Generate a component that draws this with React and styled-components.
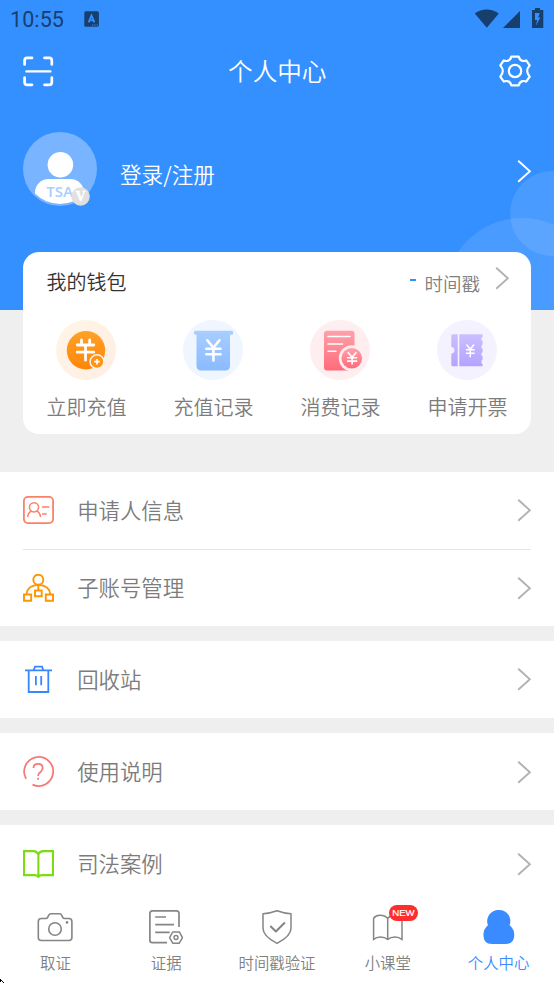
import React from "react";
import styled, { createGlobalStyle } from "styled-components";

const GlobalStyle = createGlobalStyle`
  * {
    box-sizing: border-box;
  }
  body {
    margin: 0;
    background: #efefef;
    font-family: "Noto Sans CJK SC", "Noto Sans", sans-serif;
    font-weight: 350;
    overflow: hidden;
  }
  svg {
    display: block;
    flex: none;
  }
`;

const Screen = styled.div`
  position: relative;
  display: flex;
  flex-direction: column;
  width: 554px;
  height: 984px;
  overflow: hidden;
  background: #efefef;
`;

const Hero = styled.header`
  position: relative;
  flex: none;
  height: 310px;
  overflow: hidden;
  background: #3590ff;
  color: #fff;
`;

const Bubble = styled.span`
  position: absolute;
  left: ${(props) => props.$x}px;
  top: ${(props) => props.$y}px;
  width: ${(props) => props.$size}px;
  height: ${(props) => props.$size}px;
  border-radius: 50%;
  background: rgba(255, 255, 255, 0.1);
`;

const StatusBar = styled.div`
  display: flex;
  align-items: center;
  height: 38px;
  padding: 0 10px;
  color: #173f6e;
`;

const Clock = styled.span`
  width: 74px;
  padding-top: 2px;
  font: 400 21.5px/24px Roboto, sans-serif;
  letter-spacing: 0.1px;
`;

const StatusIcons = styled.div`
  margin-left: auto;
`;

const TitleBar = styled.div`
  display: flex;
  align-items: center;
  justify-content: space-between;
  height: 66px;
  padding: 0 22.5px 0 23px;
`;

const Title = styled.h1`
  margin: 0;
  padding: 0 0 2px 1px;
  font-size: 24.6px;
  font-weight: 350;
  line-height: 36px;
`;

const Profile = styled.div`
  display: flex;
  align-items: center;
  height: 74px;
  margin-top: 28px;
  padding: 0 23px;
`;

const LoginText = styled.span`
  flex: 1;
  padding: 9px 0 0 23px;
  font-size: 21.6px;
  line-height: 32px;
`;

const ProfileArrow = styled.span`
  padding-top: 4px;
`;

const Wallet = styled.section`
  position: relative;
  flex: none;
  height: 181.5px;
  margin: -58px 23px 38px;
  border-radius: 16px;
  background: #fff;
`;

const WalletHead = styled.div`
  display: flex;
  align-items: center;
  height: 57px;
  padding: 0 22px 0 23.5px;
`;

const WalletTitle = styled.h2`
  flex: 1;
  margin: 0;
  padding-top: 2px;
  color: #333;
  font-size: 20px;
  font-weight: 350;
`;

const Balance = styled.span`
  width: 6.5px;
  height: 2px;
  margin: 0 8px 1px 0;
  background: #3590ff;
`;

const Unit = styled.span`
  padding: 4px 15px 0 0;
  color: #808080;
  font-size: 18.5px;
`;

const WalletArrow = styled.span`
  padding-bottom: 5px;
`;

const Actions = styled.div`
  display: grid;
  grid-template-columns: repeat(4, 1fr);
  padding-top: 11px;
`;

const Action = styled.div`
  display: flex;
  flex-direction: column;
  align-items: center;
  color: #7c7c7c;
  font-size: 20px;
  line-height: 30px;
  gap: 12px;

  & > svg {
    margin-right: 1.6px;
  }
`;

const Group = styled.section`
  flex: none;
  margin-bottom: ${(props) => (props.$last ? 0 : "15.3px")};
  padding: 0 23px;
  background: #fff;
`;

const Row = styled.div`
  display: flex;
  align-items: center;
  height: 77px;
  color: #7c7c7c;
  font-size: 21.4px;

  & + & {
    border-top: 1.5px solid #e4e4e4;
  }
`;

const RowLabel = styled.span`
  flex: 1;
  padding: 0 0 2px 23.2px;
`;

const TabBar = styled.nav`
  display: grid;
  grid-template-columns: repeat(5, 1fr);
  flex: none;
  height: 82px;
  margin-top: auto;
  background: #fff;
`;

const Tab = styled.div`
  position: relative;
  display: flex;
  flex-direction: column;
  align-items: center;
  padding-top: 8px;
  gap: 6px;
  color: ${(props) => (props.$active ? "#3a8bff" : "#7f7f7f")};
  font-size: 15.4px;
  line-height: 24px;
  white-space: nowrap;
`;

const NewBadge = styled.span`
  position: absolute;
  top: 3px;
  left: 56.3px;
  width: 29.5px;
  height: 16px;
  border-radius: 8px;
  background: #ff2d2d;
  color: #fff;
  font: 400 9.6px/16px "Liberation Sans", sans-serif;
  -webkit-text-stroke: 0.2px #fff;
  text-align: center;
`;

const Pointer = styled.svg`
  position: absolute;
  left: 0;
  bottom: 0;
`;

const Chevron = ({ color = "#b2b2b2" }) => (
  <svg width="14" height="24" viewBox="0 0 14 24" fill="none" stroke={color} strokeWidth="1.9">
    <path d="M1.2 1.7 12.9 12.2 1.2 22.7" />
  </svg>
);

const LangIcon = () => (
  <svg width="16" height="17" viewBox="0 0 16 17">
    <rect x="0.3" y="0.3" width="14.6" height="15.5" rx="1.5" fill="#173f6e" />
    <path d="M4.6 11.3 7.5 4.5l2.9 6.8M5.4 9.4h4.2" fill="none" stroke="#3590ff" strokeWidth="1.8" />
    <path d="M8 14.1h6" stroke="#3590ff" strokeWidth="1" strokeDasharray="1.3 1" />
  </svg>
);

const SignalIcons = () => (
  <svg width="70" height="24" viewBox="0 0 70 24" fill="#173f6e">
    <path d="M.8 6.5C7.7 1.2 17.5 1.2 24.8 6.5L12.8 20.7Z" />
    <path d="M46 4v17H29Z" />
    <path d="M61 1h5v2h3.3v18H58V3h3Z" />
    <path d="M65 6h-4v7h2.2l-1.5 6 4.7-8.5h-2.2L65.8 6Z" fill="#3590ff" />
  </svg>
);

const ScanIcon = () => (
  <svg width="31" height="31" viewBox="0 0 31 31" fill="none" stroke="#fff" strokeWidth="2.7" strokeLinecap="round">
    <path d="M1.6 8.5V4.5q0-2.6 2.6-2.6H9M21.5 1.9h4.7q2.6 0 2.6 2.6v4M1.6 21.5v4.7q0 2.6 2.6 2.6H9M21.5 28.8h4.7q2.6 0 2.6-2.6v-4.7" />
    <path d="M3.5 15.4h23.8" strokeWidth="2.4" />
  </svg>
);

const GearIcon = () => (
  <svg width="32" height="32" viewBox="0 0 32 32" fill="none" stroke="#fff" strokeWidth="2.2">
    <path d="M12.3 1.6h7.4q1 3.8 4 4.3 1.7.3 3.5-.5l3.5 5q-2.5 2.9-2.5 5.6t2.5 5.6l-3.5 5q-1.8-.8-3.5-.5-3 .5-4 4.3h-7.4q-1-3.8-4-4.3-1.7-.3-3.5.5l-3.5-5q2.5-2.9 2.5-5.6t-2.5-5.6l3.5-5q1.8.8 3.5.5 3-.5 4-4.3Z" strokeLinejoin="round" />
    <circle cx="16" cy="16" r="6.2" />
  </svg>
);

const Avatar = () => (
  <svg width="74" height="76" viewBox="0 0 74 76">
    <defs>
      <clipPath id="avatarClip">
        <circle cx="37" cy="37.5" r="35.5" />
      </clipPath>
    </defs>
    <circle cx="37" cy="38" r="37" fill="#78b4ff" />
    <circle cx="37.4" cy="33.8" r="12.8" fill="#fff" />
    <rect x="12" y="48" width="49" height="33" rx="13.5" fill="#fff" clipPath="url(#avatarClip)" />
    <text x="23.3" y="66" fill="#abd0ff" fontFamily="Noto Sans" fontWeight="600" fontSize="15" letterSpacing="0">TSA</text>
    <circle cx="57.6" cy="65.5" r="9.2" fill="#e0e0e0" />
    <text x="57.6" y="70.3" textAnchor="middle" fill="#fff" stroke="#fff" strokeWidth="0.5" fontFamily="Liberation Serif" fontWeight="700" fontSize="14">V</text>
  </svg>
);

const RechargeIcon = () => (
  <svg width="60" height="60" viewBox="0 0 60 60">
    <defs>
      <linearGradient id="rechargeBg" x2="1" y2="1">
        <stop stopColor="#fff5e6" />
        <stop offset="1" stopColor="#ffeee4" />
      </linearGradient>
      <linearGradient id="rechargeCoin" x2="0" y2="1">
        <stop stopColor="#ffa128" />
        <stop offset="1" stopColor="#ff8508" />
      </linearGradient>
    </defs>
    <circle cx="30" cy="30" r="30" fill="url(#rechargeBg)" />
    <circle cx="30" cy="30.3" r="19.2" fill="url(#rechargeCoin)" />
    <path d="M25.5 20v4.5M33.7 20v4.5M21.3 25h16.5M21.3 32.2h16.5M29.5 26v14.2" fill="none" stroke="#fff" strokeWidth="2.8" strokeLinecap="round" />
    <circle cx="41" cy="41.7" r="6.9" fill="#ff9217" stroke="#fff4e8" strokeWidth="1.5" />
    <path d="M38.2 41.7h5.6M41 38.9v5.6" stroke="#fff" strokeWidth="1.7" />
  </svg>
);

const RecordIcon = () => (
  <svg width="60" height="60" viewBox="0 0 60 60">
    <defs>
      <linearGradient id="record" x2="0" y2="1">
        <stop stopColor="#a9ceff" />
        <stop offset="1" stopColor="#8abaff" />
      </linearGradient>
    </defs>
    <circle cx="30" cy="30" r="30" fill="#f0f6ff" />
    <path d="M12.2 10.7h36.5q1.5 0 1.5 2t-1.5 2H47V45.5q0 5-5 5H18.5q-5 0-5-5V14.7h-1.3q-1.2 0-1.2-2t1.2-2Z" fill="url(#record)" />
    <path d="m24.3 20.3 6.1 7.5 6.1-7.5M30.4 28v12.5M23.3 28.8h14.2M23.3 34.3h14.2" fill="none" stroke="#fff" strokeWidth="2.6" strokeLinecap="round" />
  </svg>
);

const SpendIcon = () => (
  <svg width="60" height="60" viewBox="0 0 60 60">
    <defs>
      <linearGradient id="spend" x2="0" y2="1">
        <stop stopColor="#ffa1aa" />
        <stop offset="1" stopColor="#ff6b7b" />
      </linearGradient>
    </defs>
    <circle cx="30" cy="30" r="30" fill="#ffeeef" />
    <rect x="14" y="10.8" width="30.5" height="39.7" rx="3" fill="url(#spend)" />
    <path d="M18 16.5h22M18 24h14.5M18 31.2h8" stroke="#fff" strokeWidth="1.5" strokeLinecap="round" />
    <circle cx="41.8" cy="38.3" r="13" fill="#ffeeef" />
    <circle cx="41.8" cy="38.3" r="10.3" fill="url(#spend)" />
    <path d="m37.8 32.2 4.3 5 4.3-5M42.1 37.5V44.5M37 37.8h10.2M37 41.1h10.2" fill="none" stroke="#fff" strokeWidth="1.6" />
  </svg>
);

const InvoiceIcon = () => (
  <svg width="60" height="60" viewBox="0 0 60 60">
    <defs>
      <linearGradient id="invoice" x2="0" y2="1">
        <stop stopColor="#ccbfff" />
        <stop offset="1" stopColor="#b4a3ff" />
      </linearGradient>
    </defs>
    <circle cx="30" cy="30" r="30" fill="#f5f2ff" />
    <path d="M15.8 14.2h4.9v32h-4.9q-1.5 0-1.5-1.5v-11q3.2-.7 3.2-3.5t-3.2-3.5V15.7q0-1.5 1.5-1.5Z" fill="url(#invoice)" />
    <path d="M22.3 14.2h23.3v2.6a2.7 2.7 0 0 0 0 4.6v3a2.7 2.7 0 0 0 0 4.6v3a2.7 2.7 0 0 0 0 4.6v3a2.7 2.7 0 0 0 0 4.6v2H22.3Z" fill="url(#invoice)" />
    <path d="m29.5 24.5 3.8 4.8 3.8-4.8M33.3 29.3v8M29 29.8h8.6M29 33.2h8.6" fill="none" stroke="#fff" strokeWidth="1.5" />
  </svg>
);

const ApplicantIcon = () => (
  <svg width="31" height="28" viewBox="0 0 31 28" fill="none" stroke="#fb8168">
    <rect x="0.9" y="0.9" width="29.2" height="26.2" rx="4" strokeWidth="1.8" />
    <circle cx="11" cy="11.3" r="4.6" strokeWidth="1.5" />
    <path d="M4.7 21q.4-4.5 4-6M17.5 21q-.4-4.5-4-6M19 11h7.3M19 18h4.7" strokeWidth="1.5" />
  </svg>
);

const SubAccountIcon = () => (
  <svg width="31" height="28" viewBox="0 0 31 28" fill="none" stroke="#ff9500" strokeWidth="1.9">
    <circle cx="15.3" cy="5.7" r="5" />
    <path d="M15.3 10.8V16M3.5 20q1-8.5 11.8-9.1Q26.3 11.5 27.2 20" />
    <path d="M1 20.5h7.2v6.2H1ZM12 16.5h6.7v5.7H12ZM22.8 20.5H30v6.2h-7.2Z" />
  </svg>
);

const TrashIcon = () => (
  <svg width="31" height="28" viewBox="0 0 31 28" fill="none" stroke="#3a86ff" strokeWidth="1.8">
    <path d="M2 5.3h27M5.7 5.3V27h19.6V5.3M10.8 5 12 1.6h7L20.2 5M12.9 11v9.3M18.2 11v9.3" />
  </svg>
);

const HelpIcon = () => (
  <svg width="31" height="31" viewBox="0 0 31 31" fill="none" stroke="#f57979" strokeWidth="1.8">
    <path d="M3.1 22.7A14.5 14.5 0 1 1 9.5 28.6" />
    <path d="M10.5 12q0-4.2 4.6-4.2t4.6 4.3q0 2.2-2.2 4-2.5 1.8-2.5 4" />
    <path d="M15 21.8v2" />
  </svg>
);

const CaseIcon = () => (
  <svg width="31" height="28" viewBox="0 0 31 28" fill="none" stroke="#7ddb13" strokeWidth="2.1">
    <path d="M15.4 4.5Q14 1.1 10.5 1.1H1v24h10.5q2.5 0 3.9 1.7 1.3-1.7 3.8-1.7H30v-24h-9.7q-3.6 0-4.9 3.4v22" />
  </svg>
);

const CameraIcon = () => (
  <svg width="36" height="34" viewBox="0 0 36 34" fill="none" stroke="#858585" strokeWidth="1.6">
    <path d="M4.3 8.5h4.5q1.4 0 2-1.4l1-2q.7-1.3 2-1.3h8.8q1.3 0 2 1.3l1 2q.7 1.4 2 1.4h4.3q3 0 3 3v16q0 3-3 3H4.3q-3 0-3-3v-16q0-3 3-3Z" />
    <circle cx="18" cy="19" r="6.3" />
    <circle cx="30" cy="12.4" r="1.3" fill="#858585" stroke="none" />
  </svg>
);

const EvidenceIcon = () => (
  <svg width="34" height="34" viewBox="0 0 34 34" fill="none" stroke="#858585" strokeWidth="1.7">
    <path d="M30 17V3.3Q30 .9 27.6.9H3.3Q.9.9.9 3.3v27q0 2.4 2.4 2.4H18" />
    <path d="M6.2 7H17M6.2 14.7H25M6.2 22.3h14.5" />
    <path d="m23.7 22 6.6-.1 3.2 5.7-3.2 5.6h-6.6l-3.1-5.6Z" strokeWidth="1.5" strokeLinejoin="round" />
    <circle cx="27" cy="27.5" r="2" strokeWidth="1.4" />
  </svg>
);

const ShieldIcon = () => (
  <svg width="32" height="34" viewBox="0 0 32 34" fill="none" stroke="#858585" strokeWidth="1.5" strokeLinejoin="round">
    <path d="M16 .8Q23 3.4 30 3.8v14.5q0 8-14 15-14-7-14-15V3.8Q9 3.4 16 .8Z" />
    <path d="m9.3 16 5.6 5.5 9-9" strokeWidth="2" />
  </svg>
);

const LessonIcon = () => (
  <svg width="32" height="34" viewBox="0 0 32 34" fill="none" stroke="#858585" strokeWidth="1.5">
    <path d="M15.7 29.5V8.2Q12.5 5 8.2 5.3 4 5.2 1.6 8.2v21.2Q4.5 27 8.4 27q4.5 0 7.3 2.5Q18.5 27 23 27q4 0 7 2.4V8.2Q27 5 23 5.3q-4.4-.2-7.3 2.9" />
  </svg>
);

const MineIcon = () => (
  <svg width="32" height="34" viewBox="0 0 32 34" fill="#3a8bff">
    <path d="M15.6 0a11.2 11.2 0 0 1 11 15.2Q31.3 19 31.3 25q0 9-8.8 9H9Q.4 34 .4 25q0-6 4.5-9.8A11.2 11.2 0 0 1 15.6 0Z" />
  </svg>
);

const actions = [
  { label: "立即充值", icon: <RechargeIcon /> },
  { label: "充值记录", icon: <RecordIcon /> },
  { label: "消费记录", icon: <SpendIcon /> },
  { label: "申请开票", icon: <InvoiceIcon /> },
];

const groups = [
  [
    { label: "申请人信息", icon: <ApplicantIcon /> },
    { label: "子账号管理", icon: <SubAccountIcon /> },
  ],
  [{ label: "回收站", icon: <TrashIcon /> }],
  [{ label: "使用说明", icon: <HelpIcon /> }],
  [{ label: "司法案例", icon: <CaseIcon /> }],
];

const tabs = [
  { label: "取证", icon: <CameraIcon /> },
  { label: "证据", icon: <EvidenceIcon /> },
  { label: "时间戳验证", icon: <ShieldIcon /> },
  { label: "小课堂", icon: <LessonIcon />, isNew: true },
  { label: "个人中心", icon: <MineIcon />, active: true },
];

const App = () => {
  return (
    <Screen>
      <GlobalStyle />
      <Hero>
        <Bubble $x={510} $y={171} $size={85} />
        <Bubble $x={445} $y={218} $size={154} />
        <StatusBar>
          <Clock>10:55</Clock>
          <LangIcon />
          <StatusIcons>
            <SignalIcons />
          </StatusIcons>
        </StatusBar>
        <TitleBar>
          <ScanIcon />
          <Title>个人中心</Title>
          <GearIcon />
        </TitleBar>
        <Profile>
          <Avatar />
          <LoginText>登录/注册</LoginText>
          <ProfileArrow>
            <Chevron color="#fff" />
          </ProfileArrow>
        </Profile>
      </Hero>

      <Wallet>
        <WalletHead>
          <WalletTitle>我的钱包</WalletTitle>
          <Balance />
          <Unit>时间戳</Unit>
          <WalletArrow>
            <Chevron />
          </WalletArrow>
        </WalletHead>
        <Actions>
          {actions.map((action) => (
            <Action key={action.label}>
              {action.icon}
              <span>{action.label}</span>
            </Action>
          ))}
        </Actions>
      </Wallet>

      {groups.map((group, i) => (
        <Group key={i} $last={i === groups.length - 1}>
          {group.map((item) => (
            <Row key={item.label}>
              {item.icon}
              <RowLabel>{item.label}</RowLabel>
              <Chevron />
            </Row>
          ))}
        </Group>
      ))}

      <TabBar>
        {tabs.map((tab) => (
          <Tab key={tab.label} $active={tab.active}>
            {tab.icon}
            <span>{tab.label}</span>
            {tab.isNew && <NewBadge>NEW</NewBadge>}
          </Tab>
        ))}
      </TabBar>
      <Pointer width="5" height="5" viewBox="0 0 5 5">
        <path d="M0 0h1v1h1v1h1v1h1v1H3V3H2V2H1v1H0Z" />
      </Pointer>
    </Screen>
  );
};

export default App;
